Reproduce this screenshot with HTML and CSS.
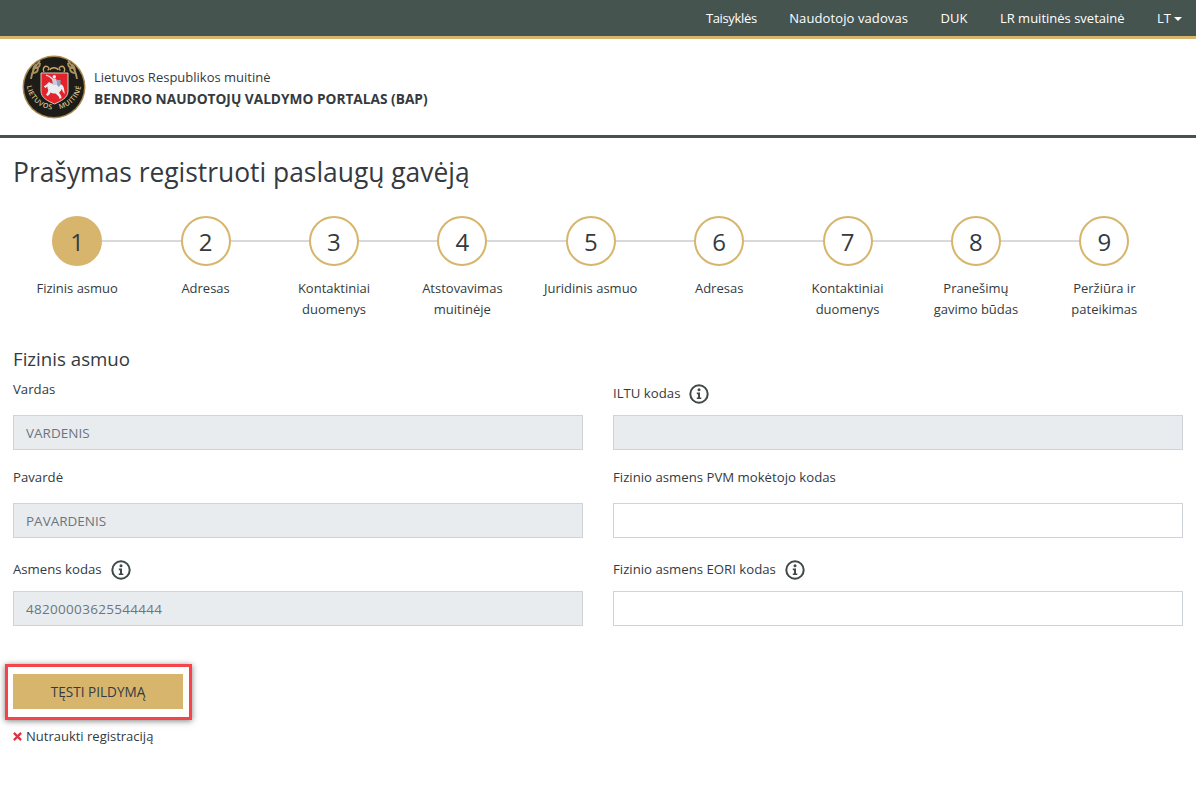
FILE: index.html
```html
<!DOCTYPE html>
<html lang="lt">
<head>
<meta charset="utf-8">
<title>Prašymas registruoti paslaugų gavėją</title>
<link rel="stylesheet" href="styles.css">
</head>
<body>
<nav class="topbar">
  <a href="#" class="tight">Taisyklės</a>
  <a href="#" class="loose">Naudotojo vadovas</a>
  <a href="#">DUK</a>
  <a href="#">LR muitinės svetainė</a>
  <a href="#" class="lang">LT<span class="caret"></span></a>
</nav>
<header class="brand">
  <svg class="logo" viewBox="0 0 64 64" width="64" height="64" aria-hidden="true">
    <defs>
      <path id="arcB" d="M4.500 27 A27 27 0 0 0 59.500 27"/>
    </defs>
    <circle cx="32" cy="32" r="31.500" fill="#a8894f"/>
    <circle cx="32" cy="32" r="30" fill="#1d1c18"/>
    <path d="M9 24 C10 16 13 11 18 6 M15.500 9 C12 10 11 13 11 16 M13 13 C16 13 18 11 18 8 M11 18 C14 18 16 16 16 13 M55 24 C54 16 51 11 46 6 M48.500 9 C52 10 53 13 53 16 M51 13 C48 13 46 11 46 8 M53 18 C50 18 48 16 48 13" fill="none" stroke="#a8935f" stroke-width="1.800"/>
    <path d="M22 17 C20 13 23 10 26 12 C27.500 13 27 15 25.500 15 M42 17 C44 13 41 10 38 12 C36.500 13 37 15 38.500 15 M28 15 C29 12 35 12 36 15" fill="none" stroke="#c9a961" stroke-width="1.300"/>
    <path d="M19 18 H46 V36 C46 43 39 46 32.500 49 C26 46 19 43 19 36 Z" fill="#e2232c" stroke="#d9cdb5" stroke-width="1"/>
    <path d="M24.500 29.500 L27 27 C30 28.500 32 30 35 29.500 C38 29 40 29 41 31 C42.500 33 42 36 43 39 L41 37 C40.500 35.500 40 34.500 39.500 34 C39 36 38 37 37 37.500 C38 39 39.500 40.500 39.500 43 L37.500 44 C37.500 41.500 35.500 40 33.500 38.500 C31.500 38.800 30 38.500 28.500 37.500 C28 39 27 40 25.500 41 L24 39.500 C25 38.500 26 37 26.200 35 C25.500 33.500 25.500 32.500 25.300 31.500 L23.500 33 L21.800 31.500 Z" fill="#ecedf0"/>
    <path d="M31 30 L30 24.500 C30 23 34 23 34.500 24.500 L35.500 30 Z" fill="#c9cfdb"/>
    <circle cx="32.300" cy="21.800" r="1.700" fill="#ecedf0"/>
    <path d="M31 24.500 L27.500 21.500 L24 20" stroke="#ecedf0" stroke-width="1.300" fill="none"/>
    <path d="M35 25 h3.500 v5 l-1.800 2 l-1.700 -2 Z" fill="#8fa0bd"/>
    <text class="logo-text"><textPath href="#arcB" startOffset="50%" text-anchor="middle">LIETUVOS&#160;&#160;&#160;MUITINĖ</textPath></text>
  </svg>
  <div class="brand-text">
    <div class="brand-org">Lietuvos Respublikos muitinė</div>
    <div class="brand-name">BENDRO NAUDOTOJŲ VALDYMO PORTALAS (BAP)</div>
  </div>
</header>
<main class="content">
  <h1>Prašymas registruoti paslaugų gavėją</h1>
  <ol class="steps">
    <li class="step active"><span class="num">1</span><span class="cap">Fizinis asmuo</span></li>
    <li class="step"><span class="num">2</span><span class="cap">Adresas</span></li>
    <li class="step"><span class="num">3</span><span class="cap">Kontaktiniai duomenys</span></li>
    <li class="step"><span class="num">4</span><span class="cap">Atstovavimas muitinėje</span></li>
    <li class="step"><span class="num">5</span><span class="cap">Juridinis asmuo</span></li>
    <li class="step"><span class="num">6</span><span class="cap">Adresas</span></li>
    <li class="step"><span class="num">7</span><span class="cap">Kontaktiniai duomenys</span></li>
    <li class="step"><span class="num">8</span><span class="cap">Pranešimų gavimo būdas</span></li>
    <li class="step"><span class="num">9</span><span class="cap">Peržiūra ir pateikimas</span></li>
  </ol>
  <h2>Fizinis asmuo</h2>
  <form class="form">
    <div class="field">
      <label class="lbl">Vardas</label>
      <input class="input" disabled value="VARDENIS">
    </div>
    <div class="field">
      <label class="lbl lbl-icon">ILTU kodas
        <svg class="info" viewBox="0 0 20 20" width="20" height="20" aria-hidden="true"><circle cx="10" cy="10" r="8.700" fill="none" stroke="#3f4a48" stroke-width="2"/><circle cx="10" cy="5.800" r="1.500" fill="#3f4a48"/><path d="M7.800 8.600 H11 V13.400 H12.300 V15 H7.800 V13.400 H9 V10.200 H7.800 Z" fill="#3f4a48"/></svg>
      </label>
      <input class="input" disabled>
    </div>
    <div class="field">
      <label class="lbl">Pavardė</label>
      <input class="input" disabled value="PAVARDENIS">
    </div>
    <div class="field">
      <label class="lbl">Fizinio asmens PVM mokėtojo kodas</label>
      <input class="input">
    </div>
    <div class="field">
      <label class="lbl lbl-icon">Asmens kodas
        <svg class="info" viewBox="0 0 20 20" width="20" height="20" aria-hidden="true"><circle cx="10" cy="10" r="8.700" fill="none" stroke="#3f4a48" stroke-width="2"/><circle cx="10" cy="5.800" r="1.500" fill="#3f4a48"/><path d="M7.800 8.600 H11 V13.400 H12.300 V15 H7.800 V13.400 H9 V10.200 H7.800 Z" fill="#3f4a48"/></svg>
      </label>
      <input class="input digits" disabled value="48200003625544444">
    </div>
    <div class="field">
      <label class="lbl lbl-icon">Fizinio asmens EORI kodas
        <svg class="info" viewBox="0 0 20 20" width="20" height="20" aria-hidden="true"><circle cx="10" cy="10" r="8.700" fill="none" stroke="#3f4a48" stroke-width="2"/><circle cx="10" cy="5.800" r="1.500" fill="#3f4a48"/><path d="M7.800 8.600 H11 V13.400 H12.300 V15 H7.800 V13.400 H9 V10.200 H7.800 Z" fill="#3f4a48"/></svg>
      </label>
      <input class="input">
    </div>
  </form>
  <div class="actions">
    <button type="button" class="btn">TĘSTI PILDYMĄ</button>
    <span class="highlight"></span>
  </div>
  <a href="#" class="cancel">
    <svg viewBox="0 0 10 10" width="9" height="9" aria-hidden="true"><path d="M1 1 L9 9 M9 1 L1 9" stroke="#dc3545" stroke-width="2.500" fill="none"/></svg>
    Nutraukti registraciją
  </a>
</main>
</body>
</html>
```
FILE: styles.css
```css
* { box-sizing: border-box; }
html, body { margin: 0; padding: 0; }
body {
  font-family: "Open Sans", "Noto Sans", sans-serif;
  font-size: 13px;
  line-height: 21px;
  color: #343a40;
  background: #fff;
}
.topbar {
  display: flex;
  justify-content: flex-end;
  align-items: center;
  gap: 32.500px;
  height: 39px;
  padding: 1px 14px 0 0;
  background: #465450;
  border-bottom: 3px solid #d7b56d;
}
.topbar a { color: #fff; text-decoration: none; }
.tight { letter-spacing: -.35px; }
.loose { letter-spacing: .1px; }
.lang { display: inline-flex; align-items: center; }
.caret {
  width: 0; height: 0;
  margin-left: 3px;
  border-left: 4px solid transparent;
  border-right: 4px solid transparent;
  border-top: 4px solid #fff;
}
.brand {
  display: flex;
  align-items: center;
  gap: 8px;
  height: 99px;
  padding: 0 0 0 22px;
  border-bottom: 3px solid #465450;
}
.logo { flex: none; }
.logo-text { font-family: "Open Sans", sans-serif; font-size: 7px; font-weight: 600; fill: #d8c48f; letter-spacing: .6px; }
.brand-text { padding-top: 2px; }
.brand-org { line-height: 21px; }
.brand-name { font-size: 13.700px; font-weight: 700; line-height: 21px; }
.content { padding: 0 13px; }
h1 {
  margin: 0;
  padding-top: 13px;
  font-size: 26.400px;
  line-height: 42px;
  font-weight: 400;
  color: #343a40;
}
.steps {
  display: grid;
  grid-template-columns: repeat(9, 128.400px);
  margin: 23px 0 0;
  padding: 0;
  list-style: none;
}
.step {
  position: relative;
  display: flex;
  flex-direction: column;
  align-items: center;
  text-align: center;
}
.step:not(:last-child)::before {
  content: "";
  position: absolute;
  top: 24px;
  left: 50%;
  width: 100%;
  height: 2px;
  background: #d9d9d9;
}
.num {
  position: relative;
  display: flex;
  align-items: center;
  justify-content: center;
  width: 50px;
  height: 50px;
  padding-top: 2px;
  border: 2px solid #d7b56d;
  border-radius: 50%;
  background: #fff;
  font-size: 24px;
  line-height: 1;
}
.active .num { background: #d7b56d; }
.cap {
  width: 100px;
  margin-top: 12px;
  height: 42px;
}
h2 {
  margin: 25px 0 0;
  font-size: 18.700px;
  line-height: 27px;
  font-weight: 400;
  color: #343a40;
}
.form {
  display: grid;
  grid-template-columns: 570px 570px;
  column-gap: 30px;
  grid-auto-rows: 88px;
  margin-top: -10px;
}
.field { display: flex; flex-direction: column; justify-content: flex-end; height: 88px; }
.lbl {
  display: flex;
  align-items: center;
  gap: 9px;
  height: 40px;
  padding-bottom: 11px;
  font-size: 13.200px;
}
.lbl-icon { height: 36px; padding-bottom: 7px; }
.info { flex: none; }
.input {
  display: block;
  width: 100%;
  height: 35px;
  padding: 0 12px;
  border: 1px solid #ced4da;
  border-radius: 0;
  background: #fff;
  font: inherit;
  font-size: 13.500px;
  color: #6c757d;
}
.input:disabled { background: #e9ecef; color: #6c757d; }
.digits { letter-spacing: .3px; }
.actions {
  position: relative;
  width: 170px;
  margin-top: 48px;
}
.btn {
  display: block;
  width: 170px;
  height: 35px;
  padding: 0;
  border: 0;
  background: #d7b56d;
  font: inherit;
  font-size: 13.600px;
  color: #343a40;
}
.highlight {
  position: absolute;
  top: -10px;
  left: -8px;
  width: 187px;
  height: 56px;
  border: 3px solid #f44349;
  box-shadow: 0 1px 6px rgba(0, 0, 0, .5);
}
.cancel {
  display: inline-flex;
  align-items: center;
  gap: 4px;
  margin-top: 17px;
  color: #343a40;
  text-decoration: none;
}
```
